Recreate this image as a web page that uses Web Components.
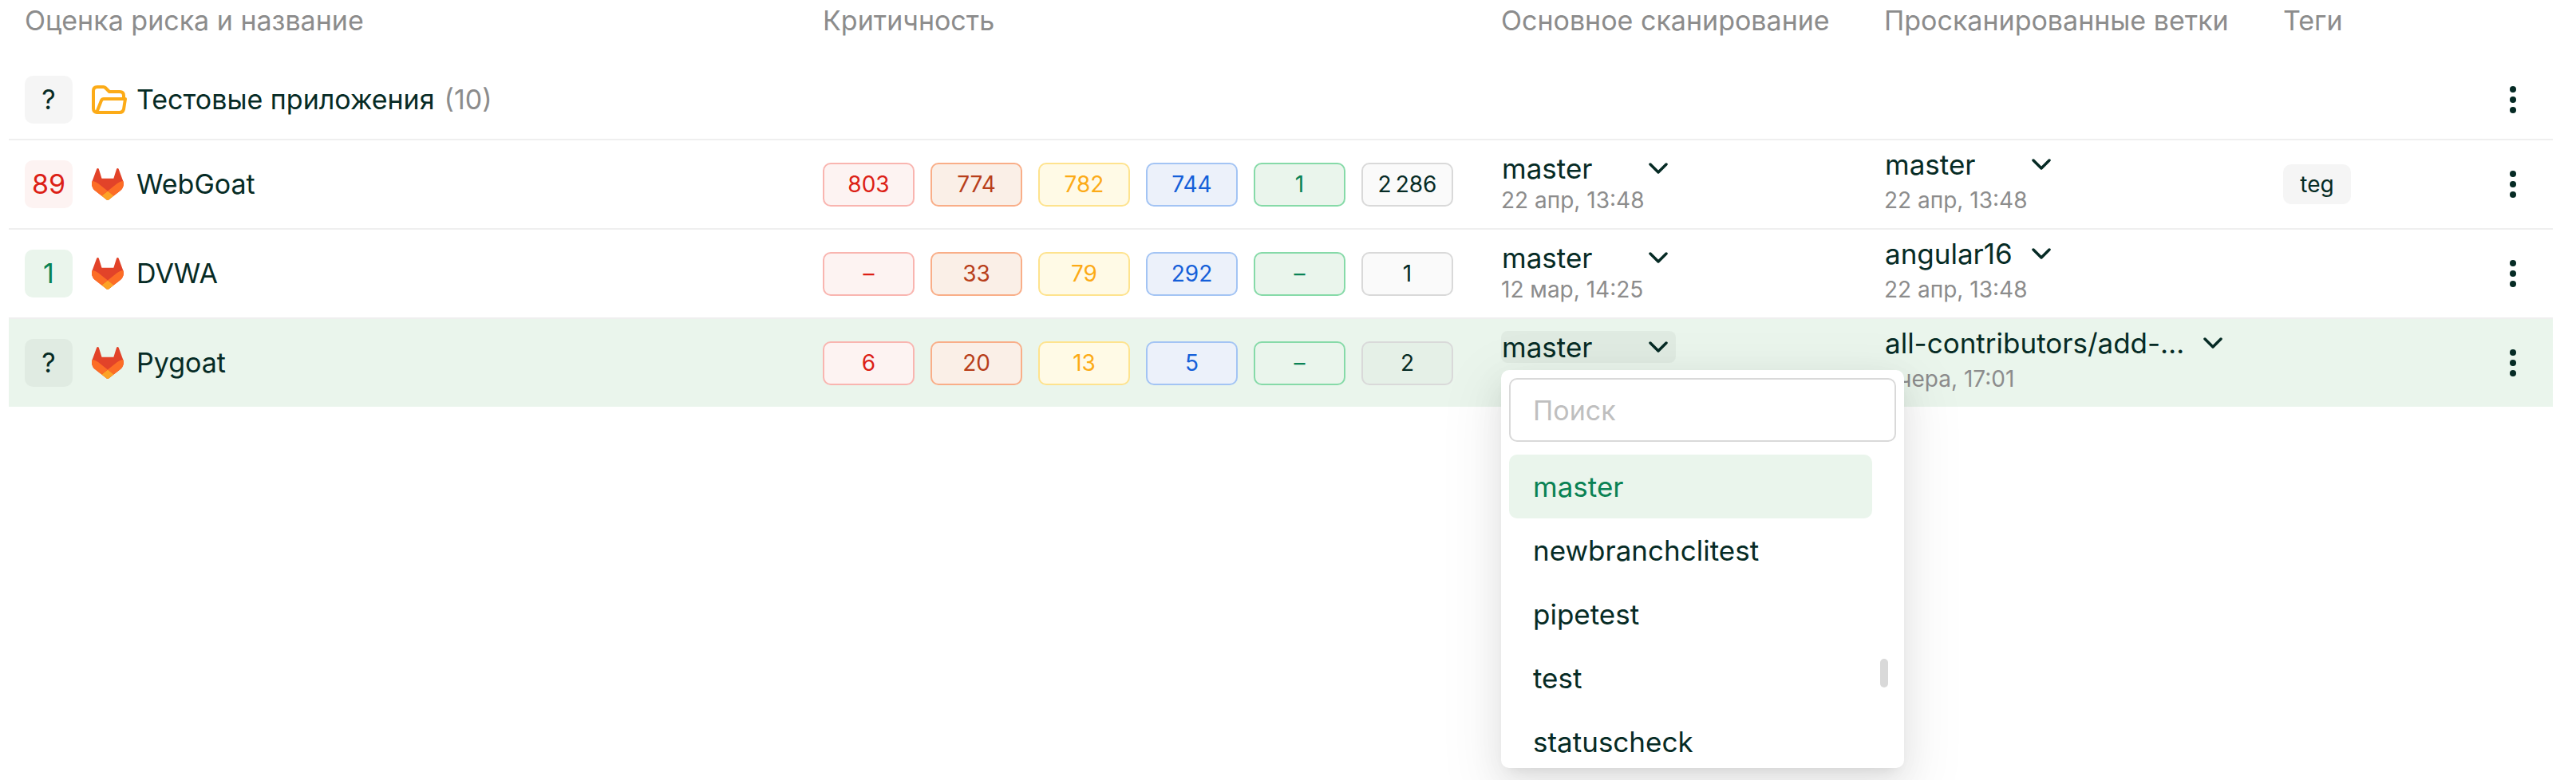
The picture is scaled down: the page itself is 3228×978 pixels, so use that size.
<!DOCTYPE html>
<html lang="ru">
<head>
    <meta charset="utf-8">
    <meta name="viewport" content="width=device-width, initial-scale=1">
    <title>Приложения</title>
    <style>
        body {
            --text: #062b25;
            --muted: #8c8c8c;
            --green: #0a8254;
            --green-bg: #eaf5ec;
            --line: #efefef;
            --radius: 10px;
            margin: 0;
            min-height: 100vh;
            background: #fff;
            color: var(--text);
            font-family: Inter, "Liberation Sans", sans-serif;
            font-size: 34px;
            line-height: 40px;
        }
    </style>
</head>
<body>
    <scan-table></scan-table>

    <script>
        class RiskScore extends HTMLElement {
            constructor() {
                super()
                this.shadow = this.attachShadow({ mode: "open" })
            }
            connectedCallback() {
                this.shadow.innerHTML = `<style>
                :host{
                    display:flex;
                    align-items:center;
                    justify-content:center;
                    flex:none;
                    width:60px;
                    height:60px;
                    border-radius:var(--radius);
                    background:rgba(0,0,0,0.04);
                }
                :host([level="high"]){
                    background:#fdf3f2;
                    color:#dc1f16;
                }
                :host([level="low"]){
                    background:var(--green-bg);
                    color:var(--green);
                }
                </style>
                <slot></slot>`
            }
        }
        customElements.define('risk-score', RiskScore)

        const ICONS = {
            folder: `<svg width="44" height="36" viewBox="0 0 44 36" fill="none" stroke="#fcab17" stroke-width="4" stroke-linecap="round" stroke-linejoin="round">
                <path d="M7 34Q2 34 2 29V7Q2 2 7 2H14.500Q16 2 17 3L22 8H35Q40 8 40 13V16"/>
                <path d="M6.500 33L12 19Q13 17 15 17H42L40 30Q39 34 35 34H7"/>
            </svg>`,
            gitlab: `<svg width="40" height="40" viewBox="0 0 25 24" preserveAspectRatio="none">
                <path fill="#e24329" d="M24.507 9.5l-.034-.09L21.082.562a.896.896 0 0 0-1.694.091l-2.29 7.01H7.825L5.535.653a.898.898 0 0 0-1.694-.09L.451 9.411.416 9.5a6.297 6.297 0 0 0 2.09 7.278l.042.032 5.16 3.867 2.56 1.935 1.554 1.176a1.051 1.051 0 0 0 1.268 0l1.555-1.176 2.56-1.935 5.211-3.9A6.297 6.297 0 0 0 24.507 9.5z"/>
                <path fill="#fc6d26" d="M24.507 9.5l-.034-.09a11.44 11.44 0 0 0-4.56 2.051l-7.447 5.632 4.742 3.584 5.211-3.9A6.297 6.297 0 0 0 24.507 9.5z"/>
                <path fill="#fca326" d="M7.707 20.677l2.56 1.935 1.555 1.176a1.051 1.051 0 0 0 1.268 0l1.555-1.176 2.56-1.935-4.743-3.584-4.755 3.584z"/>
                <path fill="#fc6d26" d="M5.01 11.461a11.43 11.43 0 0 0-4.56-2.05L.416 9.5a6.297 6.297 0 0 0 2.09 7.278l.042.032 5.16 3.867 4.745-3.584-7.443-5.632z"/>
            </svg>`,
        }

        class AppName extends HTMLElement {
            constructor() {
                super()
                this.shadow = this.attachShadow({ mode: "open" })
            }
            connectedCallback() {
                this.shadow.innerHTML = `<style>
                :host{
                    display:flex;
                    align-items:center;
                    white-space:nowrap;
                }
                .icon{
                    display:flex;
                    flex:none;
                    width:44px;
                    margin:0 12px 0 24px;
                }
                a{
                    color:inherit;
                    text-decoration:none;
                }
                ::slotted(small){
                    margin-left:12px;
                    font-size:inherit;
                    color:var(--muted);
                }
                </style>
                <slot name="score"></slot>
                <span class="icon">${ICONS[this.getAttribute('icon')]}</span>
                <a href="#"><slot></slot></a>
                <slot name="count"></slot>
                `
            }
        }
        customElements.define('app-name', AppName)

        class SeverityCounts extends HTMLElement {
            constructor() {
                super()
                this.shadow = this.attachShadow({ mode: "open" })
            }
            connectedCallback() {
                const levels = ['critical', 'high', 'medium', 'low', 'info', 'total']
                const values = this.getAttribute('values').split(',')

                this.shadow.innerHTML = `<style>
                :host{
                    display:flex;
                    gap:20px;
                    font-size:28px;
                }
                span{
                    box-sizing:border-box;
                    display:flex;
                    align-items:center;
                    justify-content:center;
                    width:115px;
                    height:55px;
                    border:2px solid;
                    border-radius:var(--radius);
                    white-space:nowrap;
                }
                .critical{ color:#dc1f16; background:#fdf3f2; border-color:#f9b5b0; }
                .high{ color:#b83f1b; background:#faefe7; border-color:#f9ae88; }
                .medium{ color:#fcab17; background:#fffae6; border-color:#fee38e; }
                .low{ color:#155fd9; background:#ecf1fa; border-color:#a3c4f4; }
                .info{ color:var(--green); background:var(--green-bg); border-color:#86daa8; }
                .total{ background:rgba(0,0,0,0.02); border-color:#d9d9d9; }
                </style>
                ${values.map((value, i) => `<span class="${levels[i]}">${value}</span>`).join('')}
                `
            }
        }
        customElements.define('severity-counts', SeverityCounts)

        class BranchMenu extends HTMLElement {
            constructor() {
                super()
                this.shadow = this.attachShadow({ mode: "open" })
            }
            connectedCallback() {
                const branches = this.getAttribute('branches').split(',')
                const current = this.getAttribute('current')

                this.shadow.innerHTML = `<style>
                :host{
                    box-sizing:border-box;
                    display:flex;
                    flex-direction:column;
                    gap:16px;
                    width:505px;
                    padding:10px 10px 0;
                    border-radius:var(--radius);
                    background:#fff;
                    box-shadow:0 8px 15px -10px rgba(0,0,0,0.12), 0 15px 40px rgba(0,0,0,0.08), 0 22px 70px 20px rgba(0,0,0,0.05);
                }
                input{
                    box-sizing:border-box;
                    width:100%;
                    height:80px;
                    padding:0 28px;
                    border:2px solid #d9d9d9;
                    border-radius:var(--radius);
                    background:#fff;
                    color:inherit;
                    font:inherit;
                    outline:none;
                }
                input::placeholder{
                    color:#bfbfbf;
                    opacity:1;
                }
                .list{
                    position:relative;
                    height:393px;
                    padding-right:30px;
                    overflow:hidden;
                }
                button{
                    display:block;
                    width:100%;
                    height:80px;
                    padding:0 30px;
                    border:0;
                    border-radius:var(--radius);
                    background:none;
                    color:inherit;
                    font:inherit;
                    font-size:35px;
                    text-align:left;
                }
                button[aria-selected="true"]{
                    background:var(--green-bg);
                    color:var(--green);
                }
                .thumb{
                    position:absolute;
                    top:256px;
                    right:10px;
                    width:10px;
                    height:36px;
                    border-radius:5px;
                    background:#d9d9d9;
                }
                </style>
                <input type="text" placeholder="Поиск" aria-label="Поиск">
                <div class="list" role="listbox">
                    ${branches.map(name => `<button type="button" role="option" aria-selected="${name == current}">${name}</button>`).join('')}
                    <div class="thumb"></div>
                </div>
                `
            }
        }
        customElements.define('branch-menu', BranchMenu)

        class BranchSelect extends HTMLElement {
            constructor() {
                super()
                this.shadow = this.attachShadow({ mode: "open" })
            }
            connectedCallback() {
                this.shadow.innerHTML = `<style>
                :host{
                    display:flex;
                    flex-direction:column;
                    align-items:flex-start;
                    position:relative;
                    white-space:nowrap;
                }
                :host([spaced]){
                    gap:5px;
                }
                button{
                    display:flex;
                    align-items:center;
                    height:40px;
                    padding:0 0 0 1px;
                    border:0;
                    border-radius:8px;
                    background:none;
                    color:inherit;
                    font:inherit;
                    font-size:35px;
                }
                :host([open]) button{
                    background:rgba(0,0,0,0.04);
                }
                .name{
                    min-width:174px;
                    text-align:left;
                }
                :host([long]) .name{
                    min-width:389px;
                }
                svg{
                    width:24px;
                    height:14px;
                    padding:0 10px;
                }
                .date{
                    min-height:40px;
                    color:var(--muted);
                    font-size:28px;
                }
                ::slotted(branch-menu){
                    position:absolute;
                    top:49px;
                    left:0;
                    z-index:1;
                }
                </style>
                <button type="button" aria-haspopup="listbox">
                    <span class="name">${this.getAttribute('branch')}</span>
                    <svg viewBox="0 0 24 14" fill="none" stroke="currentColor" stroke-width="3.500" stroke-linecap="round" stroke-linejoin="round"><path d="M2 2L12 12L22 2"/></svg>
                </button>
                <div class="date">${this.getAttribute('date') || ''}</div>
                <slot></slot>
                `
                this.shadow.querySelector('button').onclick = () => {
                    const menu = this.querySelector('branch-menu')
                    if (menu) {
                        menu.style.display = this.hasAttribute('open') ? 'none' : ''
                        this.toggleAttribute('open')
                    }
                }
            }
        }
        customElements.define('branch-select', BranchSelect)

        class RowActions extends HTMLElement {
            constructor() {
                super()
                this.shadow = this.attachShadow({ mode: "open" })
            }
            connectedCallback() {
                this.shadow.innerHTML = `<style>
                :host{
                    display:flex;
                    justify-content:center;
                }
                button{
                    display:flex;
                    padding:10px;
                    border:0;
                    background:none;
                    color:inherit;
                }
                </style>
                <button type="button" aria-label="Действия">
                    <svg width="40" height="40" viewBox="0 0 40 40" fill="currentColor">
                        <circle cx="20" cy="7" r="4"/><circle cx="20" cy="20" r="4"/><circle cx="20" cy="33" r="4"/>
                    </svg>
                </button>
                `
            }
        }
        customElements.define('row-actions', RowActions)

        class TagChip extends HTMLElement {
            constructor() {
                super()
                this.shadow = this.attachShadow({ mode: "open" })
            }
            connectedCallback() {
                this.shadow.innerHTML = `<style>
                :host{
                    box-sizing:border-box;
                    display:inline-block;
                    min-width:85px;
                    padding:5px 20px;
                    border-radius:var(--radius);
                    background:#f5f5f5;
                    font-size:28px;
                    text-align:center;
                    vertical-align:middle;
                }
                </style>
                <slot></slot>`
            }
        }
        customElements.define('tag-chip', TagChip)

        class ScanTable extends HTMLElement {
            constructor() {
                super()
                this.shadow = this.attachShadow({ mode: "open" })
            }
            connectedCallback() {
                this.shadow.innerHTML = `<style>
                :host{
                    display:block;
                    padding:0 29px 0 11px;
                }
                table{
                    width:100%;
                    table-layout:fixed;
                    border-spacing:0;
                }
                .severity{ width:850px; }
                .main{ width:480px; }
                .branches{ width:500px; }
                .tags{ width:258px; }
                .actions{ width:100px; }
                th{
                    height:76px;
                    padding:0 0 0 20px;
                    color:var(--muted);
                    font-weight:400;
                    line-height:52px;
                    text-align:left;
                    vertical-align:top;
                    white-space:nowrap;
                }
                td{
                    box-sizing:border-box;
                    height:112px;
                    padding:0 0 0 20px;
                    border-top:2px solid var(--line);
                    vertical-align:middle;
                }
                td.scan{
                    padding-bottom:15px;
                    vertical-align:bottom;
                }
                td:last-child{
                    padding:0;
                }
                .group td{
                    height:98px;
                    border-top:0;
                }
                .active td{
                    background:var(--green-bg);
                    background-clip:padding-box;
                }
                </style>
                <table>
                    <colgroup>
                        <col><col class="severity"><col class="main"><col class="branches"><col class="tags"><col class="actions">
                    </colgroup>
                    <thead>
                        <tr>
                            <th>Оценка риска и название</th>
                            <th>Критичность</th>
                            <th>Основное сканирование</th>
                            <th>Просканированные ветки</th>
                            <th>Теги</th>
                            <th></th>
                        </tr>
                    </thead>
                    <tbody>
                        <tr class="group">
                            <td colspan="5">
                                <app-name icon="folder"><risk-score slot="score">?</risk-score>Тестовые приложения<small slot="count">(10)</small></app-name>
                            </td>
                            <td><row-actions></row-actions></td>
                        </tr>
                        <tr>
                            <td><app-name icon="gitlab"><risk-score slot="score" level="high">89</risk-score>WebGoat</app-name></td>
                            <td><severity-counts values="803,774,782,744,1,2&#8239;286"></severity-counts></td>
                            <td class="scan"><branch-select branch="master" date="22 апр, 13:48"></branch-select></td>
                            <td class="scan"><branch-select spaced branch="master" date="22 апр, 13:48"></branch-select></td>
                            <td><tag-chip>teg</tag-chip></td>
                            <td><row-actions></row-actions></td>
                        </tr>
                        <tr>
                            <td><app-name icon="gitlab"><risk-score slot="score" level="low">1</risk-score>DVWA</app-name></td>
                            <td><severity-counts values="–,33,79,292,–,1"></severity-counts></td>
                            <td class="scan"><branch-select branch="master" date="12 мар, 14:25"></branch-select></td>
                            <td class="scan"><branch-select spaced branch="angular16" date="22 апр, 13:48"></branch-select></td>
                            <td></td>
                            <td><row-actions></row-actions></td>
                        </tr>
                        <tr class="active">
                            <td><app-name icon="gitlab"><risk-score slot="score">?</risk-score>Pygoat</app-name></td>
                            <td><severity-counts values="6,20,13,5,–,2"></severity-counts></td>
                            <td class="scan">
                                <branch-select open branch="master">
                                    <branch-menu current="master" branches="master,newbranchclitest,pipetest,test,statuscheck"></branch-menu>
                                </branch-select>
                            </td>
                            <td class="scan"><branch-select spaced long branch="all-contributors/add-…" date="Вчера, 17:01"></branch-select></td>
                            <td></td>
                            <td><row-actions></row-actions></td>
                        </tr>
                    </tbody>
                </table>
                `
            }
        }
        customElements.define('scan-table', ScanTable)
    </script>
</body>
</html>
